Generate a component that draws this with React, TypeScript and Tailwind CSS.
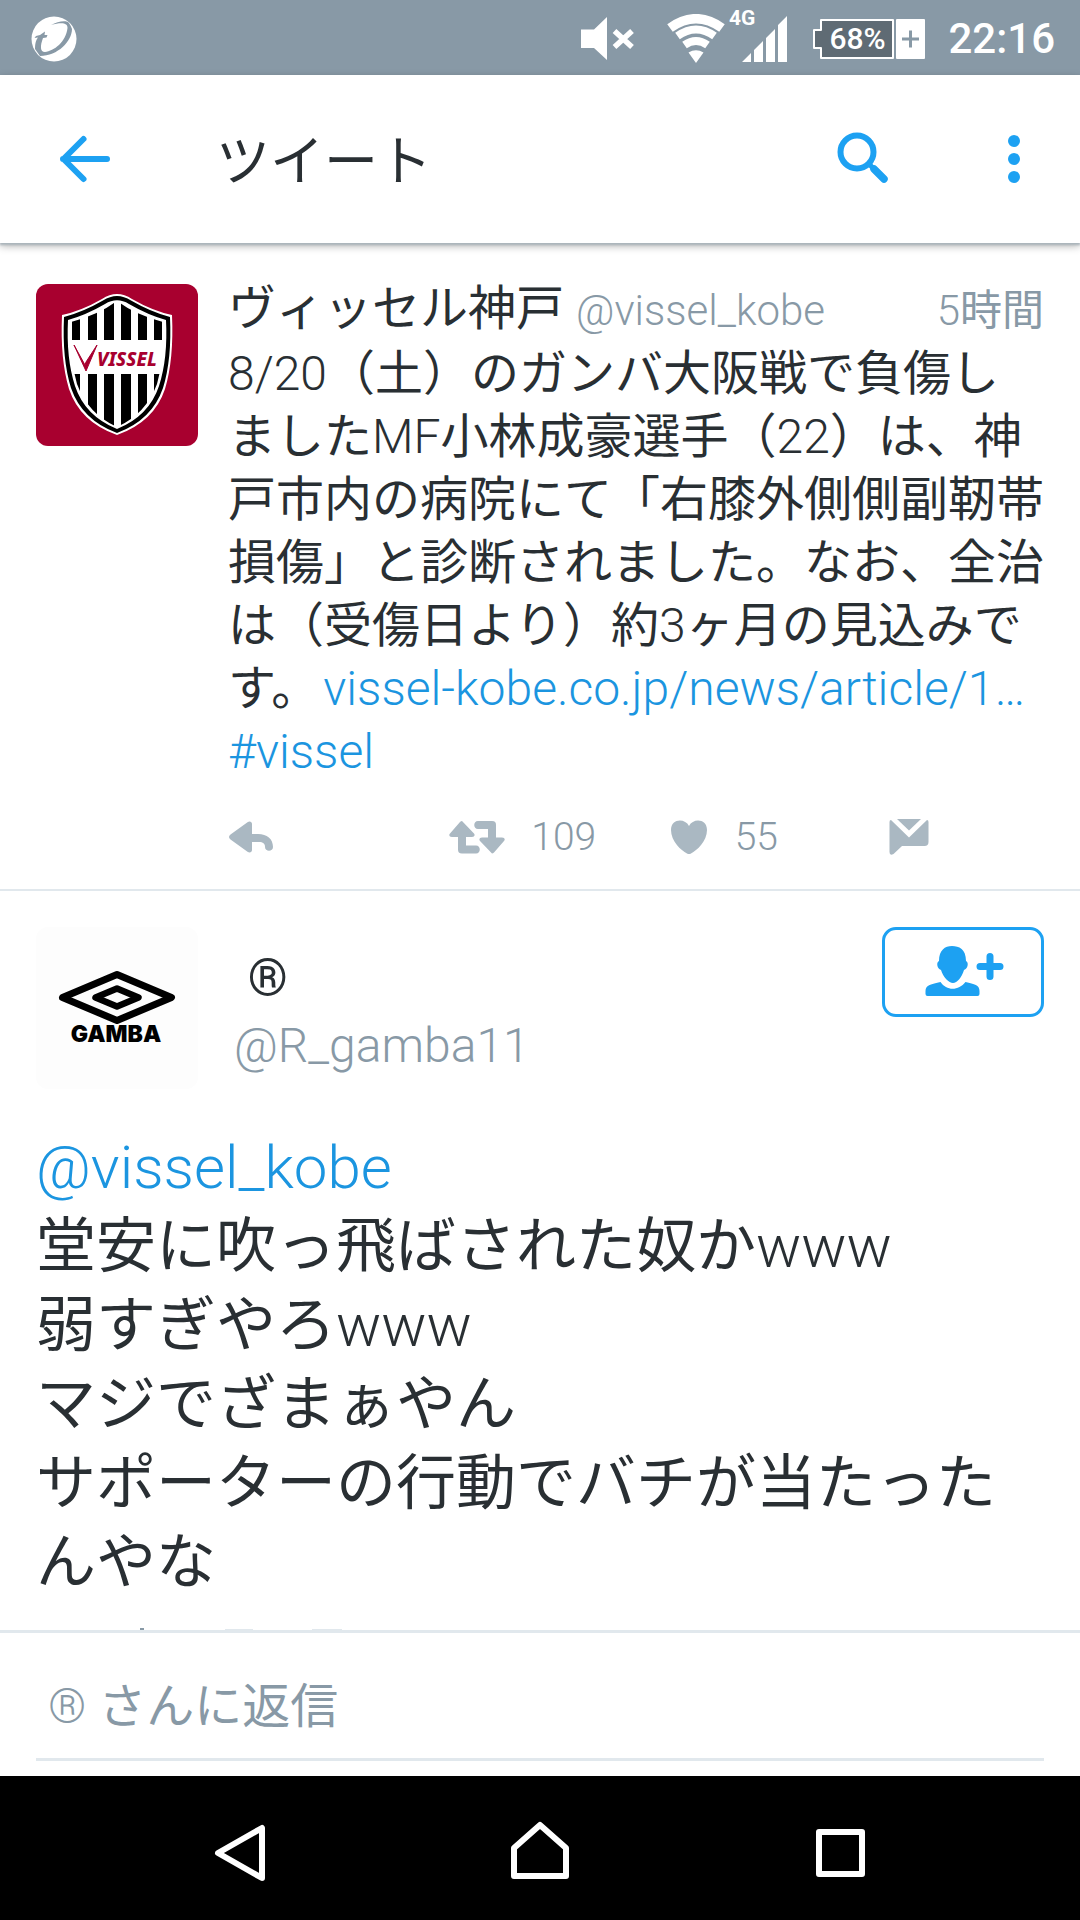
import React, { useState } from "react";

interface IconProps {
  className?: string;
}

interface MixedTextProps {
  text: string;
}

// Latin runs are set in the light weight, Japanese runs in the regular one
function MixedText({ text }: MixedTextProps) {
  const runs = text.split(/([\x20-\x7e®…]+)/).filter(Boolean);
  return (
    <>
      {runs.map((run, i) => (
        <span key={i} className={/^[\x20-\x7e®…]/.test(run) ? "font-light" : "font-normal"}>
          {run}
        </span>
      ))}
    </>
  );
}

function StatusBar() {
  return (
    <div className="flex h-[75px] shrink-0 items-center justify-between bg-[#8899a6] pl-[30px] pr-[25px] pt-0.5 text-white">
      <svg className="h-[48px] w-[48px]" viewBox="0 0 48 48">
        <circle cx="24" cy="24" r="22.5" fill="#fff" />
        <path
          d="M21 10C28 6 37 5 39 8Q41 11 42 14C42 26 28 41 10 41L5 34C5 28 6 25 8 22.500L4.500 23L6 21L10 20L15 16.500L14.500 20L17.500 20L16.500 22.500L13 23C10 31 10 37 15 37C24 36 36 27 37.500 13C38 7.500 31 7 21 10z"
          fill="#8899a6"
        />
      </svg>
      <div className="flex items-center">
        <svg className="h-[48px] w-[54px]" viewBox="0 0 54 48" fill="#fff">
          <path d="M0 14.500h13L26 2v43L13 33H0z" />
          <path d="M33.500 16l17.500 16M51 16L33.500 32" stroke="#fff" strokeWidth="5.500" fill="none" />
        </svg>
        <svg className="ml-8 h-[50px] w-[58px]" viewBox="0 0 58 50">
          <path d="M29 49L21.500 38.500Q29 34 36.500 38.500z" fill="#fff" />
          <g fill="none" stroke="#fff">
            <path d="M3 14Q29-4.500 55 14" strokeWidth="9.500" />
            <path d="M10.500 22Q29 9 47.500 22" strokeWidth="8" />
            <path d="M17.500 31Q29 23 40.500 31" strokeWidth="8" />
          </g>
        </svg>
        <span className="ml-1 h-[66px] text-[21px] font-bold leading-[24px]">4G</span>
        <svg className="-ml-[13px] h-[48px] w-[46px]" viewBox="0 0 46 48" fill="#fff">
          <path d="M0 47l9-9v9zM12 47V35l9-9v21zM24 47V23l9-9v33zM36 47V10l9-9v46z" />
        </svg>
        <div className="relative ml-6 h-[42px] w-[114px]">
          <svg className="absolute inset-0 h-full w-full" viewBox="0 0 114 42">
            <path d="M9 2h72v38H9V30H2V12h7z" fill="#5f6b74" stroke="#fff" strokeWidth="2" strokeLinejoin="round" />
            <rect x="84" y="1" width="29" height="40" rx="1" fill="#fff" />
            <path d="M98.500 12.500v17M90 21h17" stroke="#8899a6" strokeWidth="3" />
          </svg>
          <span className="absolute left-[17px] top-0 text-[30px] font-medium leading-[42px]">68%</span>
        </div>
        <span className="ml-[22px] text-[42px] font-medium leading-[48px]">22:16</span>
      </div>
    </div>
  );
}

function Header() {
  return (
    <header className="z-10 flex h-[168px] shrink-0 items-center bg-white px-[54px] shadow-[0_2px_2px_#aab4bb,0_3px_8px_rgba(0,0,0,0.3)]">
      <button aria-label="戻る" className="w-[162px]">
        <svg className="h-[60px] w-[60px]" viewBox="0 0 60 60" fill="none" stroke="#1da1f2" strokeWidth="6" strokeLinecap="round" strokeLinejoin="round">
          <path d="M53 30H9M29.500 10L9.500 30l20 20" />
        </svg>
      </button>
      <h1 className="flex-1 pt-2 text-[54px] font-normal leading-[72px]">ツイート</h1>
      <button aria-label="検索" className="mr-[111px]">
        <svg className="h-[60px] w-[60px]" viewBox="0 0 60 60" fill="none" stroke="#1da1f2" strokeLinecap="round">
          <circle cx="26" cy="23" r="16.500" strokeWidth="6" />
          <path d="M38 35l4 4" strokeWidth="5" />
          <path d="M43 40l10 10" strokeWidth="7.500" />
        </svg>
      </button>
      <button aria-label="その他">
        <svg className="h-[60px] w-[24px]" viewBox="0 0 24 60" fill="#1da1f2">
          <circle cx="12" cy="12" r="6" />
          <circle cx="12" cy="30" r="6" />
          <circle cx="12" cy="48" r="6" />
        </svg>
      </button>
    </header>
  );
}

function VisselLogo() {
  return (
    <svg className="h-[162px] w-[162px] shrink-0 rounded-xl" viewBox="0 0 162 162">
      <defs>
        <clipPath id="shield">
          <path d="M35 38Q62 31 81 17Q100 31 127 38Q129 72 121 100Q110 130 81 143Q52 130 41 100Q33 72 35 38z" />
        </clipPath>
      </defs>
      <rect width="162" height="162" fill="#a8002f" />
      <path d="M26 31Q45 27 66 15Q81 5 96 15Q117 27 136 31Q138 75 129 105Q118 138 81 151Q44 138 33 105Q24 75 26 31z" fill="#fff" />
      <path d="M28 33Q47 28 67 16.500Q81 7.500 95 16.500Q115 28 134 33Q136 75 127 104Q116 136 81 149Q46 136 35 104Q26 75 28 33z" fill="#000" />
      <path d="M32 36Q50 31 69 20Q81 12.500 93 20Q112 31 130 36Q132 74 123 102Q113 132 81 145Q49 132 39 102Q30 74 32 36z" fill="#fff" />
      <g clipPath="url(#shield)" fill="#000">
        <path d="M36 20h8v36h-8zM52 20h9v36h-9zM68 12h10v44h-10zM85 12h10v44H85zM102 20h9v36h-9zM118 20h8v36h-8z" />
        <path d="M36 90h8v60h-8zM52 90h9v60h-9zM68 90h10v60h-10zM85 90h10v60H85zM102 90h9v60h-9zM118 90h8v60h-8z" />
      </g>
      <path d="M38 61l11 20l1-3l11-17l-11 26z" fill="#a8002f" stroke="#a8002f" strokeLinejoin="round" />
      <text x="61" y="82" fontSize="19" fontWeight="800" fontStyle="italic" fontFamily="Noto Sans, sans-serif" fill="#a8002f">
        VISSEL
      </text>
    </svg>
  );
}

function GambaLogo() {
  return (
    <svg className="h-[162px] w-[162px] shrink-0 rounded-xl" viewBox="0 0 162 162">
      <rect width="162" height="162" fill="#fdfdfd" />
      <g fill="none" stroke="#000" strokeLinejoin="round">
        <path d="M81 47.500L135.500 70.500L81 93.500L26.500 70.500z" strokeWidth="7" />
        <path d="M81 61.500L102.500 70.500L81 79.500L59.500 70.500z" strokeWidth="6.500" />
      </g>
      <text x="80" y="115" textAnchor="middle" fontSize="23" fontWeight="900" fontFamily="Inter, sans-serif">
        GAMBA
      </text>
    </svg>
  );
}

function ReplyIcon({ className }: IconProps) {
  return (
    <svg className={className} viewBox="0 0 44 36" fill="currentColor">
      <path d="M18.500 3.200C20.500 1.800 23 2.500 23 5V15h6c9 0 15 5 15 13c0 5-8 5-8 0c0-3.500-2-5-6-5h-7v8c0 2.500-2.500 3-4.500 1.800L1.500 20.500c-2-1.500-2-3.500 0-5z" />
    </svg>
  );
}

function RetweetIcon({ className }: IconProps) {
  return (
    <svg className={className} viewBox="0 0 56 36" fill="currentColor">
      <path d="M13 2L25 14.500c1.500 2 0 3.500-2 3.500h-6v8.500h10c5 0 5 8 0 8H13c-3 0-4-1.500-4-4V18H3c-2.500 0-3.500-2-2-3.500L11 3q1-1 2-1z" />
      <path d="M43 34.500L31 22c-1.500-2 0-3.500 2-3.500h6V10H29c-5 0-5-8 0-8h14c3 0 4 1.500 4 4v12.500h6c2.500 0 3.500 2 2 3.500L45 33.500q-1 1-2 1z" />
    </svg>
  );
}

function HeartIcon({ className }: IconProps) {
  return (
    <svg className={className} viewBox="0 0 36 36" fill="currentColor">
      <path d="M18 7C14-1 0-.5 0 11c0 11 10 20.500 16 23.500q2 1 4 0C26 31.500 36 22 36 11C36-.5 22-1 18 7z" />
    </svg>
  );
}

function MessageIcon({ className }: IconProps) {
  return (
    <svg className={className} viewBox="0 0 40 40" fill="currentColor">
      <path d="M8 2h24L20 13.500z" />
      <path d="M2 3L20 20.500L38 3q1.500 0 1.500 2v20q0 4-4 4H13l-8.500 8Q.5 39 .5 35V5Q.5 3 2 3z" />
    </svg>
  );
}

function QuotedTweet() {
  return (
    <article className="flex border-b-2 border-[#e1e8ed] pt-[41px] pr-9 pb-7 pl-9">
      <VisselLogo />
      <div className="ml-[30px] min-w-0 flex-1">
        <div className="-mt-2 flex h-[66px] items-baseline whitespace-nowrap leading-[66px]">
          <span className="text-[48px] font-normal">ヴィッセル神戸</span>
          <span className="ml-3 flex-1 text-[42px] text-[#8899a6]">@vissel_kobe</span>
          <span className="text-[42px] text-[#8899a6]">
            <MixedText text="5時間" />
          </span>
        </div>
        <p className="text-[48px] leading-[63px]">
          <MixedText text="8/20（土）のガンバ大阪戦で負傷しましたMF小林成豪選手（22）は、神戸市内の病院にて「右膝外側側副靭帯損傷」と診断されました。なお、全治は（受傷日より）約3ヶ月の見込みです。" />
          <a href="#article" className="ml-1 text-[#1b95e0]">vissel-kobe.co.jp/news/article/1…</a>{" "}
          <a href="#vissel" className="text-[#1b95e0]">#vissel</a>
        </p>
        <div className="mt-[30px] flex items-center text-[39px] leading-[48px] text-[#8899a6]">
          <button aria-label="返信" className="w-[27%]">
            <ReplyIcon className="ml-px h-[36px] w-[44px] text-[#aab8c2]" />
          </button>
          <button aria-label="リツイート" className="flex w-[27%] items-center gap-[26px]">
            <RetweetIcon className="ml-px h-[36px] w-[56px] text-[#aab8c2]" />
            <span>109</span>
          </button>
          <button aria-label="いいね" className="flex w-[27%] items-center gap-7">
            <HeartIcon className="ml-0.5 h-[36px] w-[36px] text-[#aab8c2]" />
            <span>55</span>
          </button>
          <button aria-label="メッセージ">
            <MessageIcon className="h-[40px] w-[40px] text-[#aab8c2]" />
          </button>
        </div>
      </div>
    </article>
  );
}

function MainTweet() {
  return (
    <article className="px-9 pt-9">
      <div className="flex items-start">
        <GambaLogo />
        <div className="ml-9 flex-1 pt-[17px] text-[48px]">
          <div className="whitespace-pre pl-px text-[51px] font-medium leading-[68px]"> ®</div>
          <div className="leading-[68px] text-[#8899a6]">@R_gamba11</div>
        </div>
        <button aria-label="フォローする" className="flex h-[90px] w-[162px] items-center justify-center rounded-[14px] border-3 border-[#1da1f2]">
          <svg className="ml-1 h-[54px] w-[80px]" viewBox="0 0 80 54" fill="#1da1f2">
            <path d="M27 1c7 0 14 3 14 15c3 1 2 8-2 9c-2 7-7 13-11 13s-10-6-12-13c-4-1-5-8-2-9C14 5 20 1 27 1z" />
            <path d="M15.500 37c6 9 18 9 25 0c9 2 14 3 14 9v3q0 2-2 2h-50q-2 0-2-2v-3c0-6 6-7 15-9z" />
            <path d="M65 11.500v20M55 21.500h20" stroke="#1da1f2" strokeWidth="7" strokeLinecap="round" />
          </svg>
        </button>
      </div>
      <p className="mt-[39px] text-[60px] leading-[79px]">
        <a href="#vissel_kobe" className="text-[#1b95e0]">@vissel_kobe</a>
        <br />
        <MixedText text="堂安に吹っ飛ばされた奴かwww" />
        <br />
        <MixedText text="弱すぎやろwww" />
        <br />
        <MixedText text="マジでざまぁやん" />
        <br />
        <MixedText text="サポーターの行動でバチが当たったんやな" />
      </p>
    </article>
  );
}

function ReplyBox() {
  const [reply, setReply] = useState("");
  const empty = reply === "";
  return (
    <div className="shrink-0 border-t-3 border-[#e1e8ed] bg-white px-9 pb-[15px]">
      <label className="relative block h-[128px] border-b-3 border-[#e1e8ed] pl-3 pt-[38px] text-[48px] leading-[72px] text-[#8899a6]">
        {empty && <MixedText text="® さんに返信" />}
        <input
          type="text"
          aria-label="® さんに返信"
          value={reply}
          onChange={(e) => setReply(e.target.value)}
          className="absolute inset-0 h-full w-full bg-transparent pl-3 pt-4 text-[#292f33] outline-none"
        />
      </label>
    </div>
  );
}

function NavBar() {
  return (
    <nav className="grid h-[144px] shrink-0 grid-cols-3 place-items-center bg-black px-[90px]">
      <button aria-label="バック">
        <svg className="h-[66px] w-[66px]" viewBox="0 0 66 66" fill="none" stroke="#fff" strokeWidth="6" strokeLinejoin="round">
          <path d="M55 13v50L11 38z" />
        </svg>
      </button>
      <button aria-label="ホーム">
        <svg className="h-[66px] w-[66px]" viewBox="0 0 66 66" fill="none" stroke="#fff" strokeWidth="6" strokeLinejoin="round">
          <path d="M33 10L59 33v28H7V33z" />
        </svg>
      </button>
      <button aria-label="履歴">
        <svg className="h-[66px] w-[66px]" viewBox="0 0 66 66" fill="none" stroke="#fff" strokeWidth="6" strokeLinejoin="round">
          <path d="M12 17h43v42H12z" />
        </svg>
      </button>
    </nav>
  );
}

export default function App() {
  return (
    <div className="flex h-screen flex-col bg-white font-[Roboto,'Noto_Sans_CJK_JP',sans-serif] font-light text-[#292f33]">
      <StatusBar />
      <Header />
      <main className="min-h-0 flex-1 overflow-hidden">
        <QuotedTweet />
        <MainTweet />
      </main>
      {/* top edge of the row that is scrolled under the reply box */}
      <svg className="h-0.5 w-full shrink-0" viewBox="0 0 1080 2" preserveAspectRatio="xMinYMin slice">
        <path d="M140 0h4v2h-4z" fill="#8899a6" />
        <path d="M225 1h28v1h-28zM312 1h30v1h-30z" fill="#e1e8ed" />
      </svg>
      <ReplyBox />
      <NavBar />
    </div>
  );
}
